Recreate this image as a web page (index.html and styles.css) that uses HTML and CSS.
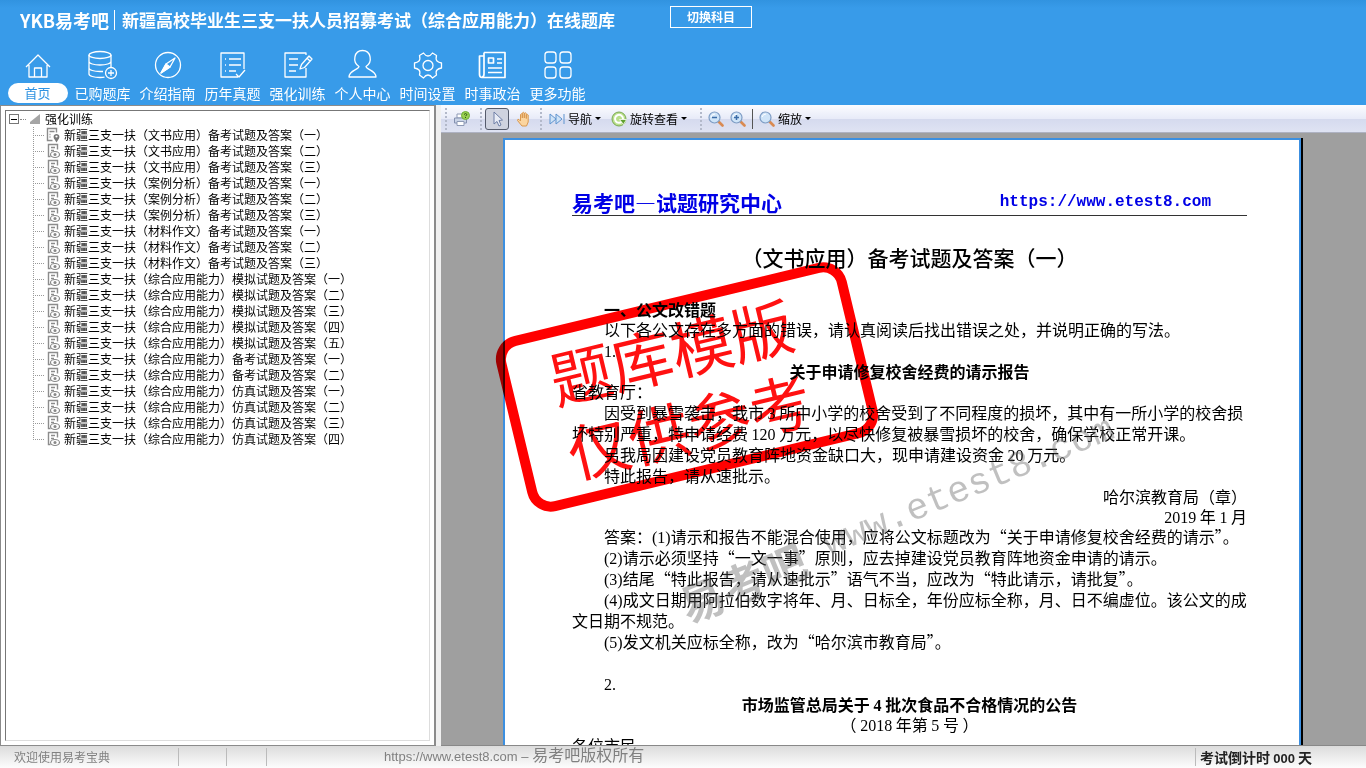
FILE: index.html
```html
<!DOCTYPE html>
<html lang="zh-CN">
<head>
<meta charset="utf-8">
<title>YKB易考吧 在线题库</title>
<link rel="stylesheet" href="styles.css">
</head>
<body>
<header class="top">
  <div class="title-row">
    <span class="logo">YKB易考吧</span>
    <h1 class="title">新疆高校毕业生三支一扶人员招募考试（综合应用能力）在线题库</h1>
    <button class="switch" type="button">切换科目</button>
  </div>
  <nav class="nav">
    <a class="nav-item active" href="#"><svg viewBox="0 0 32 32"><path d="M4 18 16 6l12 12M7 16v12h18V16M12.500 28v-9h7v9"/></svg><span>首页</span></a>
    <a class="nav-item" href="#"><svg viewBox="0 0 32 32"><ellipse cx="13" cy="6" rx="11" ry="3.500"/><path d="M2 6v19c0 2 5 3.500 11 3.500 2 0 3 0 4.500-.4M24 6v13M2 12.500C2 14.500 7 16 13 16s11-1.500 11-3.500M2 19c0 2 5 3.500 11 3.500h3"/><circle cx="24" cy="24" r="5.500"/><path d="M21 24h6M24 21v6"/></svg><span>已购题库</span></a>
    <a class="nav-item" href="#"><svg viewBox="0 0 32 32"><circle cx="16" cy="16" r="12.500"/><path d="m23 9-5 9-9 6 5-9z"/><path class="solid" d="m9 24 5-9 4 3z"/></svg><span>介绍指南</span></a>
    <a class="nav-item" href="#"><svg viewBox="0 0 32 32"><path d="M27 20V4H4v24h17M12 10h12M12 16h12M12 22h7M8 10h1M8 16h1M8 22h1M19 25l3 3 6-7"/></svg><span>历年真题</span></a>
    <a class="nav-item" href="#"><svg viewBox="0 0 32 32"><path d="M24 6V4H3v24h21v-9M7 10h9M7 16h9M7 22h7"/><path d="m18 20 1.500-4.500L27 7l3 3-7.500 8.500zM25 9l3 3"/></svg><span>强化训练</span></a>
    <a class="nav-item" href="#"><svg viewBox="0 0 32 32"><path d="M12 17.500C5 13 7 1.500 15.500 1.500S26 13 19 17.500c0 3 10 4 10 10.500H2c0-6.500 10-7.500 10-10.500z"/></svg><span>个人中心</span></a>
    <a class="nav-item" href="#"><svg viewBox="0 0 32 32"><path d="M11.500 4q2 3 4.500 3t4.500-3l4 2.500q-1 4 .5 5.500t4.500 2v5q-3 .5-4.500 2t-.5 5L20.500 29q-2-3-4.500-3t-4.500 3l-4-3q1-3.500-.5-5t-4.500-2v-5q3-.5 4.500-2t.5-5.500z"/><circle cx="16" cy="16.500" r="5"/></svg><span>时间设置</span></a>
    <a class="nav-item" href="#"><svg class="bold" viewBox="0 0 32 32"><path d="M7 3.500h21v25H5q-2.500 0-2.500-3V7H7M7 3.500V25q0 3-2 3"/><path d="M11.500 9h5v5h-5zM20 10h5M20 14h5M11 19h14M11 23.500h14"/></svg><span>时事政治</span></a>
    <a class="nav-item" href="#"><svg viewBox="0 0 32 32"><rect x="3" y="3" width="11" height="11" rx="3"/><rect x="18" y="3" width="11" height="11" rx="3"/><rect x="3" y="18" width="11" height="11" rx="3"/><rect x="18" y="18" width="11" height="11" rx="3"/></svg><span>更多功能</span></a>
  </nav>
</header>

<svg class="defs" width="0" height="0" aria-hidden="true">
  <symbol id="doc" viewBox="0 0 16 16"><path d="M12.500 6.500v-5h-9v12h2M6 4.500h4M6 7.500h3" fill="none" stroke="#8c8c8c" stroke-width="1.400"/><ellipse cx="10" cy="11.500" rx="4.500" ry="3" fill="#fff" stroke="#888" stroke-width="1.200"/><circle cx="10" cy="11.500" r="1.500" fill="#888"/></symbol>
  <symbol id="pin" viewBox="0 0 16 16"><path d="M11.500 5.500v-4h-9v12h5M4.500 4.500h5M4.500 7.500h1M4.500 10h1" fill="none" stroke="#8c8c8c" stroke-width="1.400"/><path d="M11.500 15.500 9 11.500c-2.500-6 7.500-6 5 0z" fill="#777"/><circle cx="11.500" cy="9.500" r="1.100" fill="#fff"/></symbol>
  <symbol id="lens" viewBox="0 0 16 16"><path d="m10.500 10.500 4 4" stroke="#d98a52" stroke-width="2.600" stroke-linecap="round"/><circle cx="6.500" cy="6.500" r="5.500" fill="#cfe4f8" stroke="#7d9cc4" stroke-width="1.200"/><path d="M3 6q1-3 4-3" fill="none" stroke="#fff"/></symbol>
</svg>

<main class="work">
  <section class="side">
    <div class="tree">
      <div class="root"><button class="toggle" type="button" aria-label="折叠"></button><i class="dash"></i><svg class="fold" viewBox="0 0 12 12"><path d="M11 1v10H1V9z"/></svg><span>强化训练</span></div>
      <ul class="leaves">
        <li><i class="branch"></i><svg><use href="#pin"/></svg>新疆三支一扶（文书应用）备考试题及答案（一）</li>
        <li><i class="branch"></i><svg><use href="#doc"/></svg>新疆三支一扶（文书应用）备考试题及答案（二）</li>
        <li><i class="branch"></i><svg><use href="#doc"/></svg>新疆三支一扶（文书应用）备考试题及答案（三）</li>
        <li><i class="branch"></i><svg><use href="#doc"/></svg>新疆三支一扶（案例分析）备考试题及答案（一）</li>
        <li><i class="branch"></i><svg><use href="#doc"/></svg>新疆三支一扶（案例分析）备考试题及答案（二）</li>
        <li><i class="branch"></i><svg><use href="#doc"/></svg>新疆三支一扶（案例分析）备考试题及答案（三）</li>
        <li><i class="branch"></i><svg><use href="#doc"/></svg>新疆三支一扶（材料作文）备考试题及答案（一）</li>
        <li><i class="branch"></i><svg><use href="#doc"/></svg>新疆三支一扶（材料作文）备考试题及答案（二）</li>
        <li><i class="branch"></i><svg><use href="#doc"/></svg>新疆三支一扶（材料作文）备考试题及答案（三）</li>
        <li><i class="branch"></i><svg><use href="#doc"/></svg>新疆三支一扶（综合应用能力）模拟试题及答案（一）</li>
        <li><i class="branch"></i><svg><use href="#doc"/></svg>新疆三支一扶（综合应用能力）模拟试题及答案（二）</li>
        <li><i class="branch"></i><svg><use href="#doc"/></svg>新疆三支一扶（综合应用能力）模拟试题及答案（三）</li>
        <li><i class="branch"></i><svg><use href="#doc"/></svg>新疆三支一扶（综合应用能力）模拟试题及答案（四）</li>
        <li><i class="branch"></i><svg><use href="#doc"/></svg>新疆三支一扶（综合应用能力）模拟试题及答案（五）</li>
        <li><i class="branch"></i><svg><use href="#doc"/></svg>新疆三支一扶（综合应用能力）备考试题及答案（一）</li>
        <li><i class="branch"></i><svg><use href="#doc"/></svg>新疆三支一扶（综合应用能力）备考试题及答案（二）</li>
        <li><i class="branch"></i><svg><use href="#doc"/></svg>新疆三支一扶（综合应用能力）仿真试题及答案（一）</li>
        <li><i class="branch"></i><svg><use href="#doc"/></svg>新疆三支一扶（综合应用能力）仿真试题及答案（二）</li>
        <li><i class="branch"></i><svg><use href="#doc"/></svg>新疆三支一扶（综合应用能力）仿真试题及答案（三）</li>
        <li><i class="branch"></i><svg><use href="#doc"/></svg>新疆三支一扶（综合应用能力）仿真试题及答案（四）</li>
      </ul>
    </div>
  </section>

  <section class="viewer">
    <div class="toolbar">
      <div class="group g-print">
        <button type="button" aria-label="打印"><svg viewBox="0 0 16 16"><path d="M3 3h7v4H3z" fill="#fff" stroke="#8d99b5"/><path d="M.5 7h12v5H.5z" fill="#c9d3e6" stroke="#8491b0"/><path d="M3 10.500h7v4H3z" fill="#fff" stroke="#8d99b5"/><circle cx="11.500" cy="4.500" r="4" fill="#9ad052" stroke="#6fae3a"/><path d="M10 3.500q1.500-2 3 0l-1.500 1.700M11.500 6v1" fill="none" stroke="#2e5c12"/></svg></button>
      </div>
      <div class="group g-mode">
        <button class="pressed" type="button" aria-label="选择"><svg viewBox="0 0 16 16"><path d="M5 1v12l3-2.500 2 4.500 2-1-2-4.500 3.500-.5z" fill="#e9edf6" stroke="#6e7fa6"/></svg></button>
        <button type="button" aria-label="手形"><svg viewBox="0 0 16 16"><path d="M4.500 10V3.500q1-1.500 1.800 0V7 2q1-1.500 2 0v5-4.500q1-1.500 2 0V7.500 4q1-1.200 1.900 0v7l-1.700 4H6L1.500 9.500q0-1.800 1.500-1z" fill="#fbd5a0" stroke="#d9984f"/></svg></button>
      </div>
      <div class="group g-nav">
        <button type="button"><svg viewBox="0 0 16 16"><path d="m1 3 6 5-6 5zM7 3l6 5-6 5z" fill="#cfe3f7" stroke="#5f94cf"/><path d="M15 3v10" stroke="#5f94cf"/></svg>导航<b class="caret"></b></button>
        <button type="button"><svg viewBox="0 0 16 16"><circle cx="8" cy="8" r="7" fill="#b9df8a" stroke="#7aa854"/><path d="M11 10.500A4 4 0 1 1 12 8" fill="none" stroke="#fff" stroke-width="2"/><path d="M8.500 8.500h7l-3 5z" fill="#5fa02e" stroke="#fff" stroke-width=".8"/></svg>旋转查看<b class="caret"></b></button>
      </div>
      <div class="group g-zoom">
        <button type="button" aria-label="缩小"><svg viewBox="0 0 16 16"><use href="#lens"/><path d="M4 6.500h5" stroke="#3d6da8" stroke-width="1.500"/></svg></button>
        <button type="button" aria-label="放大"><svg viewBox="0 0 16 16"><use href="#lens"/><path d="M4 6.500h5M6.500 4v5" stroke="#3d6da8" stroke-width="1.500"/></svg></button>
        <i class="sep"></i>
        <button type="button"><svg viewBox="0 0 16 16"><use href="#lens"/></svg>缩放<b class="caret"></b></button>
      </div>
    </div>
    <div class="stage">
      <article class="paper">
        <div class="watermark"><span>易考吧</span><span class="wm-url">www.etest8.com</span></div>
        <div class="masthead"><strong>易考吧—试题研究中心</strong><a href="#">https://www.etest8.com</a></div>
        <h2>（文书应用）备考试题及答案（一）</h2>
        <h3 class="ind">一、公文改错题</h3>
        <p class="ind">以下各公文存在多方面的错误，请认真阅读后找出错误之处，并说明正确的写法。</p>
        <p class="ind"><span class="n">1.</span></p>
        <h3 class="mid">关于申请修复校舍经费的请示报告</h3>
        <p>省教育厅：</p>
        <p class="ind">因受到暴雪袭击，我市 <span class="n">3</span> 所中小学的校舍受到了不同程度的损坏，其中有一所小学的校舍损<br>坏特别严重，特申请经费 <span class="n">120</span> 万元，以尽快修复被暴雪损坏的校舍，确保学校正常开课。</p>
        <p class="ind">另我局因建设党员教育阵地资金缺口大，现申请建设资金 <span class="n">20</span> 万元。</p>
        <p class="ind">特此报告，请从速批示。</p>
        <p class="sign">哈尔滨教育局（章）</p>
        <p class="sign"><span class="n">2019</span> 年 <span class="n">1</span> 月</p>
        <p class="ind">答案：<span class="n">(1)</span>请示和报告不能混合使用，应将公文标题改为“关于申请修复校舍经费的请示”。</p>
        <p class="ind"><span class="n">(2)</span>请示必须坚持“一文一事”原则，应去掉建设党员教育阵地资金申请的请示。</p>
        <p class="ind"><span class="n">(3)</span>结尾“特此报告，请从速批示”语气不当，应改为“特此请示，请批复”。</p>
        <p class="ind"><span class="n">(4)</span>成文日期用阿拉伯数字将年、月、日标全，年份应标全称，月、日不编虚位。该公文的成<br>文日期不规范。</p>
        <p class="ind"><span class="n">(5)</span>发文机关应标全称，改为“哈尔滨市教育局”。</p>
        <p class="ind gap"><span class="n">2.</span></p>
        <h3 class="mid">市场监管总局关于 <span class="n">4</span> 批次食品不合格情况的公告</h3>
        <p class="mid">（ <span class="n">2018</span> 年第 <span class="n">5</span> 号 ）</p>
        <p>各位市民</p>
        <div class="stamp"><span>题库模版</span><span>仅供参考</span></div>
      </article>
    </div>
  </section>
</main>

<footer class="status">
  <span class="cell welcome">欢迎使用易考宝典</span><span class="cell c2"></span><span class="cell c3"></span>
  <span class="copy">https://www.etest8.com – <span class="cn">易考吧版权所有</span></span>
  <strong class="countdown">考试倒计时 <span>000</span> 天</strong>
</footer>
</body>
</html>
```
FILE: styles.css
```css
* { box-sizing: border-box; }
body {
  margin: 0;
  height: 100vh;
  display: flex;
  flex-direction: column;
  overflow: hidden;
  background: #f0f0f0;
  font: 12px/16px "Noto Sans CJK SC", sans-serif;
  white-space: nowrap;
}
h1, h2, h3, p, ul { margin: 0; padding: 0; }
button { font: inherit; padding: 0; border: 0; background: none; color: inherit; }
a { color: inherit; text-decoration: none; }
svg { flex: none; }
.defs { position: absolute; }

/* Header */
.top {
  height: 105px;
  flex: none;
  background: linear-gradient(#3193e0, #389be9 8px);
  color: #fff;
}
.title-row { display: flex; align-items: center; height: 39px; padding-left: 20px; }
.logo {
  width: 95px;
  border-right: 1px solid #fff;
  font-size: 18px;
  font-weight: 700;
  line-height: 20px;
}
.title { margin-left: 7px; font-size: 17px; font-weight: 700; line-height: 20px; }
.switch {
  align-self: flex-start;
  width: 82px;
  height: 22px;
  margin: 6px 0 0 55px;
  border: 1px solid #fff;
  font-weight: 700;
}
.nav { display: flex; padding: 10px 0 0 5px; }
.nav-item {
  width: 65px;
  display: flex;
  flex-direction: column;
  align-items: center;
  gap: 2px;
  font-size: 14px;
  line-height: 20px;
}
.nav-item svg {
  width: 32px;
  height: 32px;
  fill: none;
  stroke: #fff;
  stroke-width: 1.3;
  stroke-linejoin: round;
}
.nav-item svg.bold { stroke-width: 1.7; }
.nav-item .solid { fill: #fff; }
.active span {
  width: 60px;
  border-radius: 10px;
  background: #fff;
  color: #2f93e2;
  font-size: 13px;
  text-align: center;
}

/* Workspace */
.work { flex: 1; min-height: 0; display: flex; }
.side {
  width: 436px;
  flex: none;
  margin-right: 5px;
  padding: 4px;
  border: 1px solid #8b8b8b;
  border-right-width: 2px;
  background: #fff;
}
.tree {
  height: 100%;
  padding: 0 0 0 3px;
  border: 1px solid;
  border-color: #777 #ddd #ddd #777;
}
.root, .leaves li { display: flex; align-items: center; height: 16px; }
.toggle {
  width: 10px;
  height: 10px;
  border: 1px solid #777;
  background: linear-gradient(#000, #000) center / 6px 1px no-repeat;
}
.dash { width: 6px; margin: 0 3px 0 1px; border-top: 1px dotted #888; }
.fold { width: 12px; height: 12px; margin-right: 4px; fill: #a5a5a5; }
.leaves { list-style: none; padding-left: 24px; }
.leaves svg { width: 16px; height: 16px; margin-right: 3px; }
.branch {
  width: 12px;
  height: 16px;
  background:
    repeating-linear-gradient(#999 0 1px, transparent 1px 2px) 0 0 / 1px 16px no-repeat,
    repeating-linear-gradient(90deg, #999 0 1px, transparent 1px 2px) 0 8px / 12px 1px no-repeat;
}
.leaves li:last-child .branch { background-size: 1px 8px, 12px 1px; }

/* Viewer */
.viewer { flex: 1; min-width: 0; display: flex; flex-direction: column; }
.toolbar {
  display: flex;
  align-items: center;
  height: 28px;
  flex: none;
  padding-left: 4px;
  background: linear-gradient(#fbfcff, #e8ebf8 50%, #d5daee 52%, #dfe3f3);
  border-bottom: 1px solid #aeb2c2;
}
.group { display: flex; align-items: center; }
.group::before {
  content: "";
  width: 2px;
  height: 22px;
  background: repeating-linear-gradient(#b3b9ca 0 2px, transparent 2px 4px);
}
.toolbar button { display: flex; align-items: center; }
.toolbar svg { width: 16px; height: 16px; }
.g-print { width: 35px; gap: 7px; }
.g-mode { width: 60px; gap: 3px; }
.g-mode button { width: 24px; height: 22px; justify-content: center; }
.g-mode .pressed { border: 1px solid #555b6b; border-radius: 3px; background: #cfd3df; }
.g-nav { width: 160px; gap: 7px; }
.g-nav button, .g-zoom button { gap: 3px; }
.g-nav .caret { margin-right: 3px; }
.g-zoom { gap: 6px; }
.sep { width: 1px; height: 20px; background: #555; }
.caret { border: 3px solid transparent; border-top-color: #000; border-bottom: 0; }
.stage {
  flex: 1;
  min-height: 0;
  padding: 5px 3px 0 0;
  overflow: hidden;
  background: #9f9f9f;
  border-bottom: 1px solid #888;
}
.paper {
  position: relative;
  width: 798px;
  max-width: 100%;
  min-height: 1120px;
  margin: 0 auto;
  padding: 49px 52px 0 67px;
  background: #fff;
  border: 2px solid #3c8fe0;
  border-bottom: 0;
  box-shadow: 2px 0 #000;
  font-size: 16px;
  line-height: 21px;
}
.paper .n { font-family: "Liberation Serif", serif; line-height: 1; }
.masthead {
  display: flex;
  justify-content: space-between;
  align-items: center;
  height: 27px;
  padding-right: 36px;
  border-bottom: 1px solid #333;
  color: #0000e6;
  font-size: 21px;
}
.masthead a { font: bold 16px "Liberation Mono", monospace; }
.paper h2 {
  margin: 26px 0 27px;
  font-size: 21px;
  font-weight: 500;
  line-height: 30px;
  text-align: center;
}
.paper h3 { font-size: 16px; line-height: 20px; }
.ind { text-indent: 32px; }
.mid { text-align: center; }
.sign { text-align: right; line-height: 20px; }
.gap { margin-top: 21px; }
.watermark {
  position: absolute;
  top: 377px;
  left: 392px;
  display: flex;
  align-items: center;
  gap: 24px;
  transform: translate(-50%, -50%) rotate(-22.5deg);
  color: rgba(90, 90, 90, .38);
  font-size: 44px;
  font-weight: 700;
  line-height: 48px;
}
.wm-url { font: 37px/48px "Liberation Mono", monospace; }
.stamp {
  position: absolute;
  top: 247px;
  left: 182px;
  width: 360px;
  height: 180px;
  display: flex;
  flex-direction: column;
  align-items: center;
  justify-content: center;
  padding: 0 14px 4px 0;
  border: 10px solid #f00;
  border-radius: 24px;
  transform: translate(-50%, -50%) rotate(-13.5deg);
  mix-blend-mode: multiply;
  color: #f11;
  font-size: 62px;
  line-height: 76px;
}

/* Status bar */
.status {
  display: flex;
  align-items: center;
  height: 22px;
  flex: none;
  background: linear-gradient(#dcdcdc, #fdfdfd);
  color: #808080;
}
.cell { height: 18px; border-right: 1px solid #bbb; }
.welcome { width: 179px; padding-left: 14px; line-height: 18px; }
.c2 { width: 48px; }
.c3 { width: 40px; }
.copy { flex: 1; padding-left: 117px; font: 13px/22px "Liberation Sans", sans-serif; }
.cn { font-family: "Noto Sans CJK SC", sans-serif; font-size: 16px; line-height: 1; }
.countdown {
  width: 171px;
  padding-left: 4px;
  border-left: 1px solid #bbb;
  color: #222;
  font-size: 14px;
  line-height: 18px;
}
.countdown span { font: bold 13px/1 "Liberation Sans", sans-serif; }
```
